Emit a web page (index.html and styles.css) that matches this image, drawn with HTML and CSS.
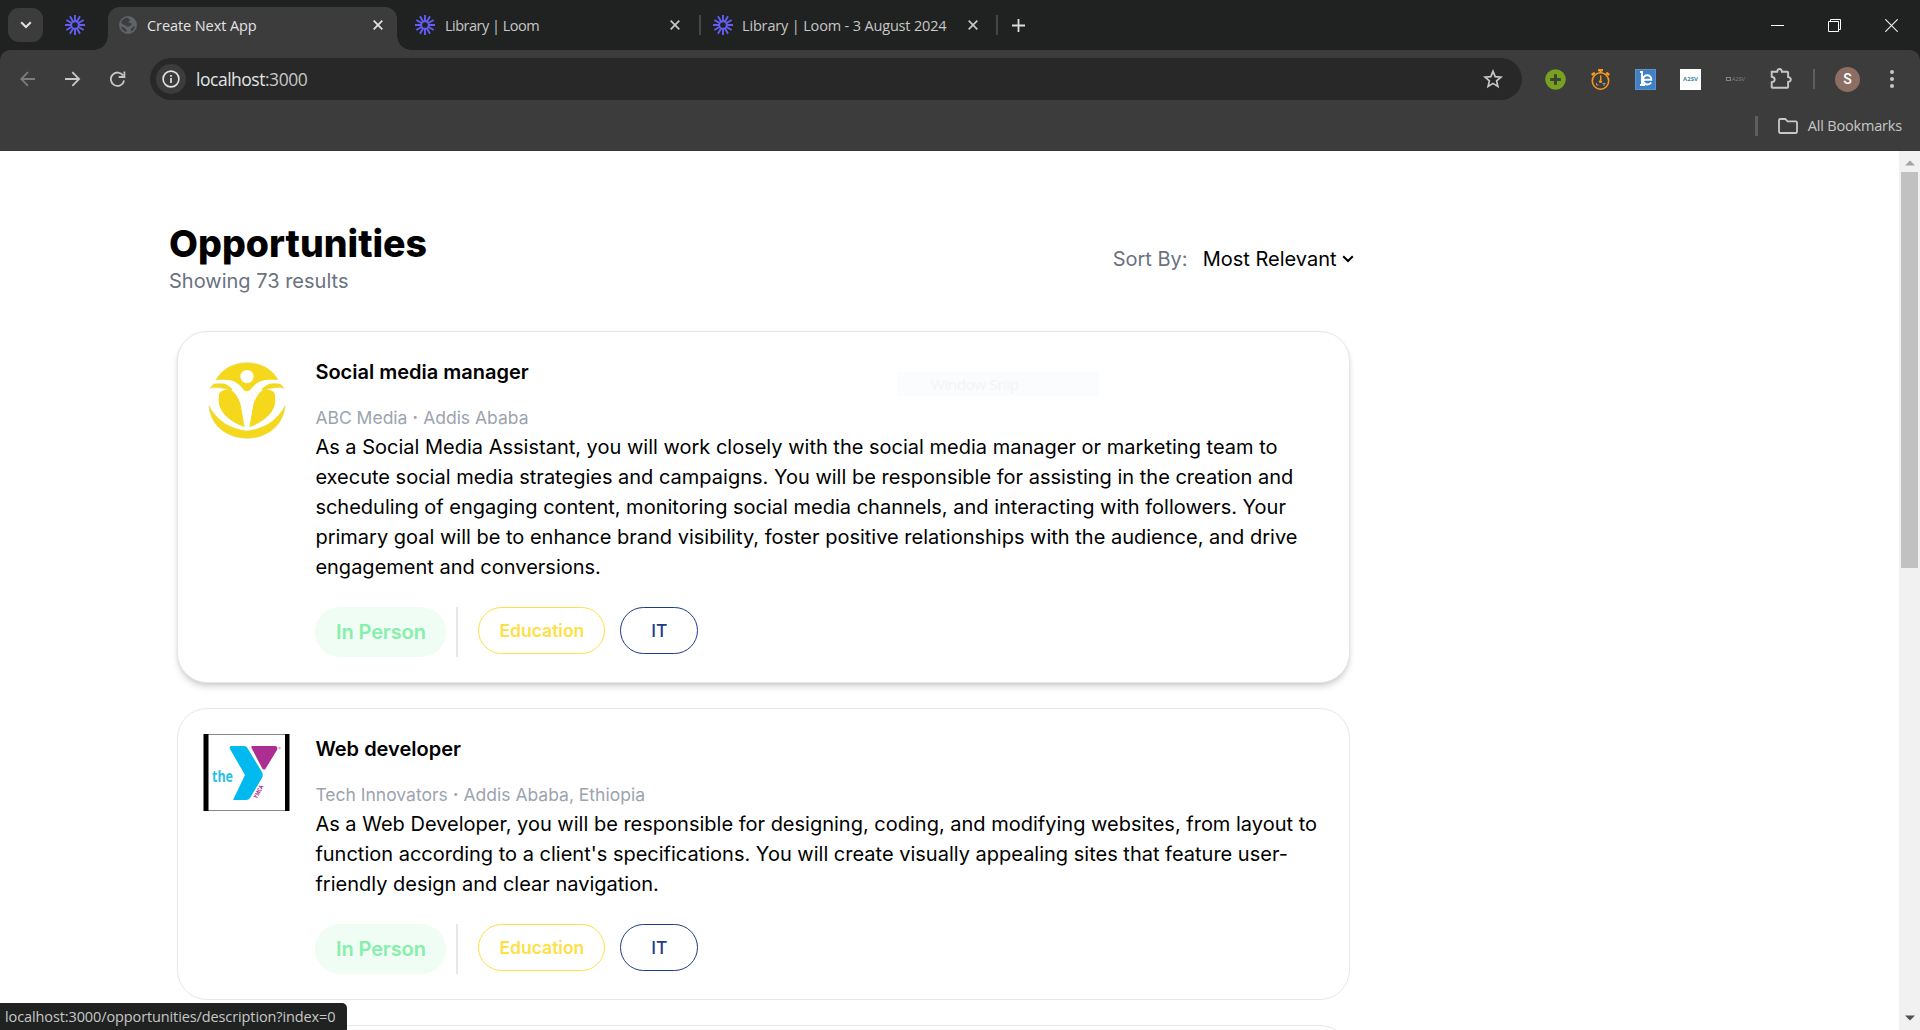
FILE: index.html
```html
<!DOCTYPE html>
<html lang="en">
<head>
<meta charset="utf-8">
<title>Create Next App</title>
<link rel="stylesheet" href="styles.css">
</head>
<body>
<svg class="defs" width="0" height="0" aria-hidden="true">
  <symbol id="loom" viewBox="-10 -10 20 20">
    <g stroke="#625df5" stroke-width="1.9" fill="none">
      <circle r="3.8"/>
      <path d="M0-3.5V-10M0 3.5V10"/>
      <path d="M0-3.5V-10M0 3.5V10" transform="rotate(30)"/>
      <path d="M0-3.5V-10M0 3.5V10" transform="rotate(60)"/>
      <path d="M0-3.5V-10M0 3.5V10" transform="rotate(90)"/>
      <path d="M0-3.5V-10M0 3.5V10" transform="rotate(120)"/>
      <path d="M0-3.5V-10M0 3.5V10" transform="rotate(150)"/>
    </g>
  </symbol>
  <symbol id="close" viewBox="0 0 10 10"><path d="M.7.7l8.6 8.6M9.3.7L.7 9.3" stroke="currentColor" stroke-width="1.7"/></symbol>
</svg>

<header class="browser">
  <div class="tabstrip">
    <div class="tab-search"><svg width="12" height="8" viewBox="0 0 12 8"><path d="M1.2 1.2L6 6l4.800-4.800" fill="none" stroke="#e3e3e3" stroke-width="2"/></svg></div>
    <div class="pinned"><svg width="20" height="20"><use href="#loom"/></svg></div>
    <div class="tab active">
      <svg class="fav" width="18" height="18" viewBox="0 0 18 18"><circle cx="9" cy="9" r="9" fill="#5f6368"/><path d="M8.500 1.700c-2.500 0-5 1.500-6.200 4 .2 1.800.7 2.800 2.200 3 1.300.1 2.300.4 2.600 1.300.2.900 1.500.8 2.500.6 1.200 0 1.200-1.200 2.300-1.700 1.300-.5.8-1.900-.5-1.900-1.300.1-2-.2-2-1 .1-1.300 1.800-1 1.500-2.100-.2-.8-1.200-.8-2.400-2.200zM2 10.800c.8 2.600 2.800 4.600 5.600 5.300.5-.8.200-1.500-.4-2-.8-.6-.6-1.700-1.800-2.300-1-.5-2.200-.8-3.400-1zM15.800 10c-1.500.6-3.200 1.800-3.800 3.200-.3.900.2 1.600.6 2 1.900-1.200 3-3 3.200-5.200z" fill="#3c3c3c"/></svg>
      <span class="tab-title t1">Create Next App</span>
      <svg class="x" width="10" height="10"><use href="#close"/></svg>
    </div>
    <div class="tab second">
      <svg class="fav" width="20" height="20"><use href="#loom"/></svg>
      <span class="tab-title t2">Library | Loom</span>
      <svg class="x" width="10" height="10"><use href="#close"/></svg>
    </div>
    <i class="tab-sep"></i>
    <div class="tab third">
      <svg class="fav" width="20" height="20"><use href="#loom"/></svg>
      <span class="tab-title t3">Library | Loom - 3 August 2024</span>
      <svg class="x" width="10" height="10"><use href="#close"/></svg>
    </div>
    <i class="tab-sep"></i>
    <svg class="newtab" width="13" height="13" viewBox="0 0 13 13"><path d="M6.500 0v13M0 6.500h13" stroke="#dcdcdc" stroke-width="1.800"/></svg>
    <div class="window-controls">
      <svg width="13" height="13" viewBox="0 0 13 13"><path d="M0 6.500h13" stroke="#fff"/></svg>
      <svg width="13" height="13" viewBox="0 0 13 13"><path d="M.5 2.500h10v10h-10zM2.500 2.500V.5h10v10h-2" fill="none" stroke="#fff"/></svg>
      <svg width="13" height="13" viewBox="0 0 13 13"><path d="M.3.300l12.400 12.400M12.700.300L.300 12.700" stroke="#e8e8e8" stroke-width="1.200"/></svg>
    </div>
  </div>

  <div class="toolbar">
    <svg class="nav" width="16" height="16" viewBox="0 0 16 16"><path d="M15 8H1.200M8 1.200L1.200 8l6.800 6.800" fill="none" stroke="#7c7c7c" stroke-width="1.800"/></svg>
    <svg class="nav" width="16" height="16" viewBox="0 0 16 16"><path d="M0 8h14M7.300 1.200L14.100 8l-6.800 6.800" fill="none" stroke="#c7c7c7" stroke-width="1.800"/></svg>
    <svg class="nav" width="16" height="16" viewBox="0 0 16 16"><path d="M13.100 4.500A6.700 6.700 0 1 0 14.100 9.500M14.400.500V6H8.700" fill="none" stroke="#c7c7c7" stroke-width="1.800"/></svg>
    <div class="omnibox">
      <div class="site-info"><svg width="18" height="18" viewBox="0 0 18 18"><circle cx="9" cy="9" r="7.900" fill="none" stroke="#e3e3e3" stroke-width="1.600"/><path d="M9 8v5M9 5v1.800" stroke="#e3e3e3" stroke-width="1.700"/></svg></div>
      <span class="url">localhost<span class="port">:3000</span></span>
      <svg class="star" width="20" height="20" viewBox="0 0 20 20"><path d="M10 2.300l2.200 5.300 5.700.5-4.300 3.700 1.300 5.600-4.900-3-4.900 3 1.300-5.600-4.300-3.700 5.700-.5z" fill="none" stroke="#c7c7c7" stroke-width="1.700"/></svg>
    </div>
    <div class="extensions">
      <svg width="21" height="21" viewBox="0 0 21 21"><circle cx="10.500" cy="10.500" r="10.300" fill="#78a022"/><path d="M10.500 5.200v10.600M5.200 10.500h10.600" stroke="#3b4430" stroke-width="3"/></svg>
      <svg width="21" height="21" viewBox="0 0 21 21"><g fill="none" stroke="#f7981d"><circle cx="10.500" cy="12" r="8.200" stroke-width="1.600"/><path d="M8 1.200h5M10.500 1v3" stroke-width="2.200"/><path d="M1.800 6l3-2.300M19.200 6l-3-2.300" stroke-width="2.600"/><path d="M10.700 6.500v4.500" stroke-width="1.400"/></g><circle cx="10.500" cy="12.500" r="1.600" fill="#f7981d"/><path d="M6.500 14v2h2M12.500 14.500h3M14 14.500v2.500" fill="none" stroke="#9a9a9a"/></svg>
      <svg width="21" height="21" viewBox="0 0 21 21"><path d="M0 0h21v21H0z" fill="#3f80c9"/><path d="M.5.500h20v20H.500z" fill="none" stroke="#5c92cb"/><path d="M5 3h2v13M7 10.700h9.300c.2-5.800-8.300-6-8.300.1 0 5.200 5.600 5.800 8.300 2.700M5 16h5" fill="none" stroke="#fff" stroke-width="1.900"/></svg>
      <div class="a2sv-light">A2SV</div>
      <div class="a2sv-dark"><i></i>A2SV</div>
      <svg width="22" height="22" viewBox="0 0 22 22"><path d="M1.700 3.700h5.500c.3-3.600 4.400-3.600 4.700 0h5.400c.5 0 .8.300.8.800v4.600c3.600.4 3.600 4.400 0 4.800v5c0 .5-.3.800-.8.800H2.500c-.5 0-.8-.3-.8-.8v-4.800c4-.7 4-4.700 0-5.400z" fill="none" stroke="#c7c7c7" stroke-width="1.900"/></svg>
    </div>
    <i class="bar-sep"></i>
    <div class="avatar">S</div>
    <div class="menu-dots"><i></i><i></i><i></i></div>
  </div>

  <div class="bookmarks">
    <i class="book-sep"></i>
    <svg width="20" height="16" viewBox="0 0 20 16"><path d="M1 2.300C1 1.500 1.500 1 2.300 1h5l2.200 2.300h8.200c.8 0 1.300.5 1.300 1.300v9.100c0 .8-.5 1.300-1.300 1.300H2.300C1.500 15 1 14.500 1 13.700z" fill="none" stroke="#c7c7c7" stroke-width="1.800"/></svg>
    <span>All Bookmarks</span>
  </div>
</header>

<div class="viewport">
  <main class="page">
    <div class="page-head">
      <div class="heading">
        <h1>Opportunities</h1>
        <p class="count">Showing 73 results</p>
      </div>
      <div class="sort"><span class="sort-label">Sort By:</span><span>Most Relevant</span><svg width="12" height="8" viewBox="0 0 12 8"><path d="M1.200 1.200L6 6l4.800-4.800" fill="none" stroke="#000" stroke-width="2"/></svg></div>
    </div>

    <article class="card hovered">
      <svg class="logo round" width="88" height="78" viewBox="0 0 88 78">
        <g fill="#f5d81c" stroke="#e3dd45" stroke-width=".6">
          <path d="M13 18C25-5 63-5 75 18c-9-1-15 1-20 5l-7 7c-2 2-6 2-8 0l-7-7c-5-4-11-6-20-5z"/>
          <path d="M7 26c2-2 3-4 5-4 9-1 15 0 19 4l-3 2c-7-2-14-3-21-2zM81 26c-2-2-3-4-5-4-9-1-15 0-19 4l3 2c7-2 14-3 21-2z"/>
          <path d="M17 31c11-3 19 3 22 16l3 18C27 60 12 48 17 31zM71 31c-11-3-19 3-22 16l-3 18C61 60 76 48 71 31z"/>
          <path d="M6 44c8 15 21 23 38 25 17-2 30-10 38-25C78 87 10 87 6 44z"/>
        </g>
        <path d="M12 19c14-3 22 0 28 8 2 3 6 3 8 0 6-8 14-11 28-8-16 2-24 13-26 26l-4 22h-4l-4-22c-2-13-10-24-26-26z" fill="#fff"/>
        <path d="M17 30c3-2 7-3 10-3 7 5 10 12 11 19l2 17C24 58 12 48 17 30zM71 30c-3-2-7-3-10-3-7 5-10 12-11 19l-2 17c16-5 28-15 23-33z" fill="#f5d81c"/>
        <circle cx="44" cy="14.500" r="6.600" fill="#fff"/>
      </svg>
      <div class="body">
        <h2>Social media manager</h2>
        <p class="org">ABC Media <b>·</b> Addis Ababa</p>
        <p class="desc">As a Social Media Assistant, you will work closely with the social media manager or marketing team to execute social media strategies and campaigns. You will be responsible for assisting in the creation and scheduling of engaging content, monitoring social media channels, and interacting with followers. Your primary goal will be to enhance brand visibility, foster positive relationships with the audience, and drive engagement and conversions.</p>
        <div class="tags"><span class="tag mode">In Person</span><i class="rule"></i><span class="tag edu">Education</span><span class="tag it">IT</span></div>
      </div>
      <div class="snip-ghost">Window Snip</div>
    </article>

    <article class="card">
      <svg class="logo" width="88" height="78" viewBox="0 0 88 78">
        <path d="M0 0h88v77H0z" fill="#fff"/><path d="M4 .500h78M4 76.500h78" stroke="#888"/>
        <path d="M.5 0H5.500v77H.5zM82 0h4.500v77h-4.500z" fill="#000"/>
        <path d="M29 12h12c2 0 3 1 4 3l14 23c1 2 1 4 0 6L47 64c-1 1-2 2-4 2H30l12-25-15-26c-1-2 0-3 2-3z" fill="#00b9ee"/>
        <path d="M50 12h22c2 0 3 2 2 4L63 34c-1 2-3 2-4 0L49 15c-1-2-1-3 1-3z" fill="#ac2e91"/>
        <circle cx="76.500" cy="14" r="1.200" fill="#d9a0cb"/>
        <text x="9" y="48" textLength="21" lengthAdjust="spacingAndGlyphs" class="the">the</text>
        <text x="0" y="0" transform="translate(54 65) rotate(-62)" textLength="14" lengthAdjust="spacingAndGlyphs" class="ymca">YMCA</text>
      </svg>
      <div class="body">
        <h2>Web developer</h2>
        <p class="org">Tech Innovators <b>·</b> Addis Ababa, Ethiopia</p>
        <p class="desc">As a Web Developer, you will be responsible for designing, coding, and modifying websites, from layout to function according to a client's specifications. You will create visually appealing sites that feature user-friendly design and clear navigation.</p>
        <div class="tags"><span class="tag mode">In Person</span><i class="rule"></i><span class="tag edu">Education</span><span class="tag it">IT</span></div>
      </div>
    </article>

    <article class="card"></article>
  </main>
  <div class="scrollbar">
    <svg width="10" height="6" viewBox="0 0 10 6"><path d="M0 5.500L5 .500l5 5z" fill="#a3a3a3"/></svg>
    <i class="thumb"></i>
    <svg width="10" height="6" viewBox="0 0 10 6"><path d="M0 .500l5 5 5-5z" fill="#505050"/></svg>
  </div>
  <div class="status">localhost:3000/opportunities/description?index=0</div>
</div>
</body>
</html>
```
FILE: styles.css
```css
* { box-sizing: border-box; }
body { margin: 0; width: 1920px; height: 1030px; overflow: hidden; display: flex; flex-direction: column; background: #fff; font-family: Inter, sans-serif; }
h1, h2, p { margin: 0; }
svg { display: block; flex: none; }
i { display: block; flex: none; }
.defs { position: absolute; }

/* browser chrome */
.browser { flex: none; height: 151px; background: #202221; font-family: "Open Sans", sans-serif; color: #e3e3e3; }
.tabstrip { height: 50px; display: flex; align-items: center; padding-left: 8px; }
.tab-search { width: 35px; height: 34px; border-radius: 11px; background: #3c3c3c; display: grid; place-items: center; }
.pinned { width: 65px; padding-left: 22px; }
.tab { height: 42px; display: flex; align-items: center; color: #c7c7c7; }
.tab-title { white-space: nowrap; font-size: 14.500px; line-height: 20px; padding-top: 1px; letter-spacing: -.16px; }
.tab .x { margin-left: auto; }
.active { position: relative; width: 289px; height: 43px; align-self: flex-end; border-radius: 12px 12px 0 0; background: #3c3c3c; padding: 0 14px 7px 11px; color: #e3e3e3; }
.active::before, .active::after { content: ""; position: absolute; bottom: 0; width: 14px; height: 14px; }
.active::before { left: -14px; background: radial-gradient(circle at 0 0, transparent 13.500px, #3c3c3c 14px); }
.active::after { right: -14px; background: radial-gradient(circle at 100% 0, transparent 13.500px, #3c3c3c 14px); }
.t1 { margin-left: 10px; letter-spacing: -.08px; }
.t2 { margin-left: 10px; letter-spacing: -.5px; }
.second { width: 302px; padding: 0 19px 0 18px; }
.tab-sep { width: 2px; height: 20px; background: #444645; }
.third { width: 295px; padding: 0 18px 0 12px; }
.t3 { margin-left: 9px; }
.newtab { margin-left: 14px; }
.window-controls { margin-left: auto; display: flex; gap: 44px; padding-right: 22px; }

.toolbar { height: 58px; background: #3c3c3c; border-radius: 10px 10px 0 0; display: flex; align-items: center; padding: 0 23px 0 20px; }
.nav { margin-right: 29px; }
.omnibox { width: 1372px; height: 42px; border-radius: 21px; background: #282828; display: flex; align-items: center; padding: 0 19px 0 6px; margin-left: -5px; }
.site-info { width: 30px; height: 30px; border-radius: 50%; background: #3c3c3c; display: grid; place-items: center; }
.url { margin-left: 10px; font-size: 17.500px; letter-spacing: -.48px; }
.port { color: #c7c7c7; }
.star { margin-left: auto; }
.extensions { display: flex; align-items: center; gap: 24px; margin-left: 23px; }
.a2sv-light, .a2sv-dark { width: 21px; height: 21px; display: flex; align-items: center; justify-content: center; font-size: 6px; font-weight: 700; }
.a2sv-light { background: #fff; color: #3c7fa6; }
.a2sv-dark { color: #858585; font-size: 5.500px; gap: 1px; font-weight: 400; }
.a2sv-dark i { width: 5px; height: 4px; border: 1px solid #858585; }
.bar-sep { width: 2px; height: 20px; background: #5e5e5e; margin-left: 21px; }
.avatar { width: 25px; height: 25px; border-radius: 50%; background: #8d6e63; color: #fff; font: 500 14px/25px Roboto, sans-serif; text-align: center; margin-left: 20px; }
.menu-dots { display: flex; flex-direction: column; gap: 3px; margin-left: auto; margin-right: 3px; }
.menu-dots i { width: 4px; height: 4px; border-radius: 50%; background: #c7c7c7; }
.bookmarks { height: 43px; background: #3c3c3c; border-bottom: 1px solid #383838; display: flex; align-items: center; justify-content: flex-end; padding: 0 18px 7px 0; font-size: 14.500px; color: #c7c7c7; }
.book-sep { width: 3px; height: 20px; background: #5e5e5e; margin-right: 19.500px; }
.bookmarks span { margin-left: 10px; letter-spacing: -.18px; }

/* page */
.viewport { flex: 1; min-height: 0; position: relative; display: flex; justify-content: space-between; }
.page { width: 1360px; padding: 68px 0 0 169px; overflow: hidden; font-size: 20px; line-height: 30px; color: #000; }
.page-head { display: flex; justify-content: space-between; align-items: center; height: 80px; margin-bottom: 32px; padding-right: 6.500px; }
.heading { padding-bottom: 2px; }
h1 { font-size: 37.500px; line-height: 45px; font-weight: 800; }
.count { color: #6b7280; }
.sort { display: flex; align-items: center; }
.sort-label { color: #6b7280; margin-right: 15px; }
.sort svg { margin-left: 5px; }
.card { position: relative; width: 1173px; margin: 0 0 25px 8px; min-height: 100px; border: 1px solid #e5e7eb; border-radius: 30px; padding: 25px; display: flex; background: #fff; }
.hovered { box-shadow: 0 5px 7px -1px rgba(0,0,0,.14), 0 2px 5px -2px rgba(0,0,0,.14); }
.round { margin-top: 5px; }
.body { margin-left: 24.400px; flex: 1; }
h2 { font-size: 20px; line-height: 30px; font-weight: 600; }
.org { margin-top: 17px; font-size: 17.500px; line-height: 28px; color: #9ca3af; }
.org b { font-weight: 700; }
.tags { display: flex; align-items: flex-start; margin-top: 25px; height: 50px; }
.tag { display: flex; align-items: center; justify-content: center; border-radius: 25px; font-weight: 500; font-size: 17.500px; }
.mode { width: 131px; height: 50px; background: #f0fdf4; color: #86efac; font-size: 20px; font-weight: 600; letter-spacing: -.1px; }
.rule { width: 2px; height: 50px; background: #e5e7eb; margin: 0 20px 0 10px; }
.edu { width: 127px; height: 47px; border: 1px solid #fde047; color: #fde047; font-weight: 600; }
.it { width: 78px; height: 47px; border: 1px solid #1e3a8a; color: #1e3a8a; margin-left: 15px; }
.the { font: 700 16px "Open Sans", sans-serif; fill: #2bbfe8; }
.ymca { font: 700 6px "Open Sans", sans-serif; fill: #ac2e91; }
.snip-ghost { position: absolute; left: 719px; top: 40px; width: 202px; height: 24px; padding-left: 34px; background: #fbfcfe; color: #f3f4f5; font: 15px/24px "Open Sans", sans-serif; letter-spacing: -.3px; }

.scrollbar { width: 21px; background: #f1f1f1; display: flex; flex-direction: column; align-items: center; padding: 9px 0; }
.thumb { width: 17px; height: 396px; background: #c1c1c1; margin: 6px 0 auto; }
.status { position: absolute; left: 0; bottom: 0; width: 347px; height: 27px; padding-left: 5px; border-radius: 0 5px 0 0; background: #202221; color: #c7c7c7; font: 14.500px/27px "Open Sans", sans-serif; letter-spacing: -.11px; white-space: nowrap; }
```
